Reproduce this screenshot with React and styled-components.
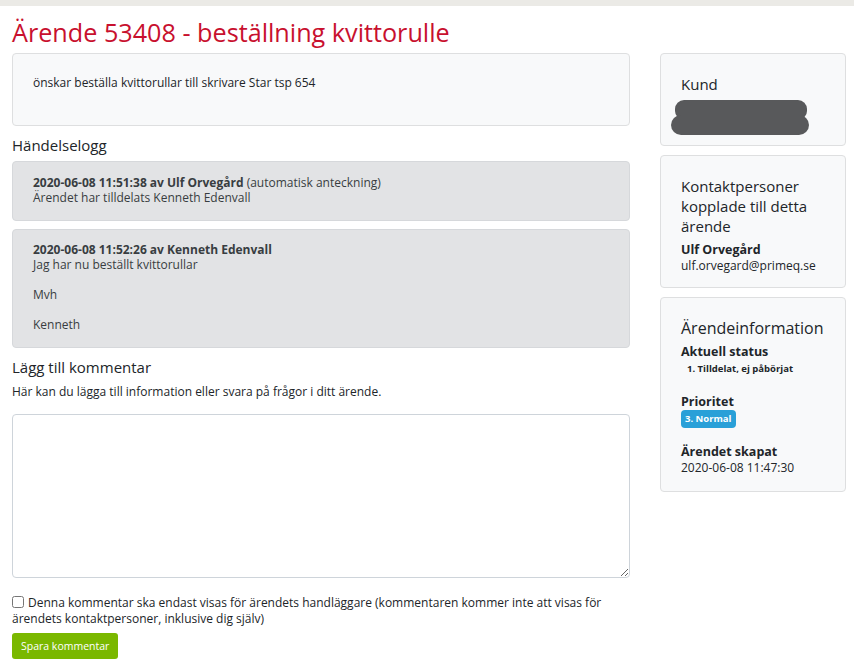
import styled, { createGlobalStyle } from 'styled-components'

const GlobalStyle = createGlobalStyle`
  html, body { margin: 0; padding: 0; background: #fff; }
  body {
    font-family: "Open Sans", "Noto Sans", sans-serif;
    font-size: 12px;
    color: #212529;
  }
`

const TopBar = styled.div`
  height: 6px;
  background: #ebeae6;
`

const Page = styled.div`
  padding: 0 8px 0 12px;
`

const Title = styled.h1`
  margin: 11px 0 6px;
  font-size: 25.2px;
  font-weight: 500;
  line-height: 30px;
  color: #c8102e;
`

const Layout = styled.div`
  display: grid;
  grid-template-columns: 618px 186px;
  column-gap: 30px;
  align-items: start;
`

const Main = styled.div`
  display: flex;
  flex-direction: column;
`

const Side = styled.div`
  display: flex;
  flex-direction: column;
  gap: 9px;
`

const Card = styled.div`
  background: ${(p) => (p.tone === 'grey' ? '#e2e3e5' : '#f8f9fa')};
  border: 1px solid ${(p) => (p.tone === 'grey' ? '#d6d8db' : '#dedfe0')};
  border-radius: 4px;
  color: ${(p) => (p.tone === 'grey' ? '#383d41' : '#212529')};
  padding: ${(p) => p.pad || '20px'};
  margin-bottom: ${(p) => p.mb || '0'};
  line-height: 15px;
`

const Description = styled(Card)`
  min-height: 73px;
  box-sizing: border-box;
`

const SectionTitle = styled.h2`
  margin: 0 0 ${(p) => p.mb || '6px'};
  font-size: 15px;
  font-weight: 500;
  line-height: 20px;
`

const Strong = styled.b`
  font-weight: 700;
`

const Note = styled.p`
  margin: 0 0 14px;
  line-height: 16px;
`

const TextArea = styled.textarea`
  display: block;
  width: 100%;
  height: 164px;
  box-sizing: border-box;
  border: 1px solid #ced4da;
  border-radius: 4px;
  resize: vertical;
  font: inherit;
  margin-bottom: 17px;
`

const CheckLabel = styled.label`
  display: block;
  line-height: 16px;
  color: #212529;
  margin-bottom: 6px;
`

const Check = styled.input`
  width: 12px;
  height: 12px;
  margin: 0 4px 0 0;
  vertical-align: -1px;
`

const SaveButton = styled.button`
  align-self: flex-start;
  height: 26px;
  padding: 0 9px;
  border: none;
  border-radius: 3px;
  background: #7ab800;
  color: #fff;
  font: inherit;
  font-size: 10.5px;
  cursor: pointer;
`

const SideTitle = styled.h3`
  margin: 0 0 6px;
  font-size: ${(p) => p.size || '15px'};
  font-weight: 500;
  line-height: 20px;
`

const Label = styled.div`
  font-weight: 700;
  font-size: 12.5px;
  line-height: 16px;
`

const Block = styled.div`
  margin-bottom: ${(p) => p.mb || '0'};
`

const Badge = styled.span`
  display: inline-block;
  font-size: 9.5px;
  font-weight: 700;
  line-height: 12px;
  padding: 3px 4px;
  border-radius: 4px;
  color: ${(p) => (p.color === 'info' ? '#fff' : '#212529')};
  background: ${(p) => (p.color === 'info' ? '#29a0d8' : 'transparent')};
  margin-left: ${(p) => (p.color === 'info' ? '0' : '2px')};
`

const Redacted = () => (
  <svg width="140" height="36" viewBox="0 0 140 36" style={{ display: 'block', marginLeft: '-11px' }}>
    <rect x="5" y="0" width="132" height="20" rx="9" fill="#58595b" />
    <rect x="1" y="15" width="138" height="20" rx="10" fill="#58595b" />
  </svg>
)

const App = () => {
  return (
    <>
      <GlobalStyle />
      <TopBar />
      <Page>
        <Title>Ärende 53408 - beställning kvittorulle</Title>
        <Layout>
          <Main>
            <Description pad="21px 20px" mb="9px">
              önskar beställa kvittorullar till skrivare Star tsp 654
            </Description>
            <SectionTitle>Händelselogg</SectionTitle>
            <Card tone="grey" pad="13px 20px 15px" mb="8px">
              <Strong>2020-06-08 11:51:38 av Ulf Orvegård</Strong> (automatisk anteckning)
              <br />
              Ärendet har tilldelats Kenneth Edenvall
            </Card>
            <Card tone="grey" pad="12px 20px 15px" mb="9px">
              <Strong>2020-06-08 11:52:26 av Kenneth Edenvall</Strong>
              <br />
              Jag har nu beställt kvittorullar
              <br />
              <br />
              Mvh
              <br />
              <br />
              Kenneth
            </Card>
            <SectionTitle mb="7px">Lägg till kommentar</SectionTitle>
            <Note>Här kan du lägga till information eller svara på frågor i ditt ärende.</Note>
            <TextArea />
            <CheckLabel>
              <Check type="checkbox" />
              Denna kommentar ska endast visas för ärendets handläggare (kommentaren kommer inte att visas för
              ärendets kontaktpersoner, inklusive dig själv)
            </CheckLabel>
            <SaveButton>Spara kommentar</SaveButton>
          </Main>
          <Side>
            <Card pad="20px 20px 9px">
              <SideTitle>Kund</SideTitle>
              <Redacted />
            </Card>
            <Card pad="20px 20px 14px">
              <SideTitle>Kontaktpersoner kopplade till detta ärende</SideTitle>
              <Label>Ulf Orvegård</Label>
              <div>ulf.orvegard@primeq.se</div>
            </Card>
            <Card pad="20px 20px 16px">
              <SideTitle size="16px">Ärendeinformation</SideTitle>
              <Block mb="16px">
                <Label>Aktuell status</Label>
                <Badge>1. Tilldelat, ej påbörjat</Badge>
              </Block>
              <Block mb="16px">
                <Label>Prioritet</Label>
                <Badge color="info">3. Normal</Badge>
              </Block>
              <Block>
                <Label>Ärendet skapat</Label>
                <div>2020-06-08 11:47:30</div>
              </Block>
            </Card>
          </Side>
        </Layout>
      </Page>
    </>
  )
}

export default App
